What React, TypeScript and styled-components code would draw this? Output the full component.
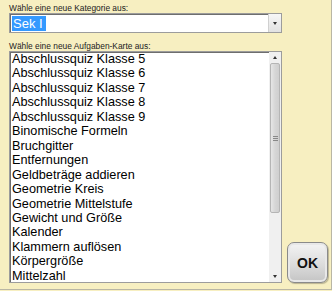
import React from 'react'
import styled, { createGlobalStyle } from 'styled-components'

const GlobalStyle = createGlobalStyle`
  html, body {
    margin: 0;
    padding: 0;
    background: #f7efc1;
  }
`

const Frame = styled.div`
  box-sizing: border-box;
  width: 332px;
  height: 290px;
  display: flex;
  gap: 5px;
  padding: 3px 0 0 9px;
  background: #f7efc1;
  border-right: 1px solid #b9b6a4;
  border-bottom: 1px solid #b9b6a4;
  font-family: 'Liberation Sans', Arial, sans-serif;
`

const Column = styled.div`
  display: flex;
  flex-direction: column;
  width: 273px;
`

const Label = styled.div<{ $top?: number }>`
  font-size: 8.4px;
  line-height: 10px;
  color: #222;
  margin-top: ${(p) => p.$top ?? 0}px;
`

const SelectBox = styled.div`
  box-sizing: border-box;
  height: 20px;
  display: flex;
  align-items: center;
  background: #fff;
  border: 1px solid #9c9c9c;
  box-shadow: inset 1px 1px 0 #6e6e6e;
  padding-left: 2px;
`

const Selected = styled.span`
  flex: 1;
  display: flex;
  align-items: center;
`

const Highlight = styled.span`
  background: #3399ff;
  color: #fff;
  font-size: 13px;
  line-height: 15px;
  padding: 0 3px 0 1px;
`

const ArrowButton = styled.div`
  width: 12px;
  align-self: stretch;
  display: flex;
  align-items: center;
  justify-content: center;
  background: linear-gradient(#f7f7f7, #e2e2e2);
  border-left: 1px solid #d0d0d0;
`

const Triangle = styled.span<{ $up?: boolean }>`
  width: 0;
  height: 0;
  border-left: 2.5px solid transparent;
  border-right: 2.5px solid transparent;
  ${(p) => (p.$up ? 'border-bottom: 3px solid #333;' : 'border-top: 3px solid #333;')}
`

const ListBox = styled.div`
  box-sizing: border-box;
  height: 232px;
  display: flex;
  background: #fff;
  border: 1px solid #9c9c9c;
  box-shadow: inset 1px 1px 0 #6e6e6e;
  overflow: hidden;
`

const Items = styled.div`
  flex: 1;
  padding: 0 0 0 2px;
  overflow: hidden;
`

const Item = styled.div`
  font-size: 12.7px;
  line-height: 14.45px;
  color: #000;
  white-space: nowrap;
`

const ScrollBar = styled.div`
  width: 12px;
  display: flex;
  flex-direction: column;
  background: #f0f0f0;
`

const ScrollArrow = styled.div`
  height: 11px;
  display: flex;
  align-items: center;
  justify-content: center;
`

const Thumb = styled.div`
  box-sizing: border-box;
  height: 150px;
  margin: 0 1px;
  border: 1px solid #b5b5b5;
  border-radius: 2px;
  background: linear-gradient(90deg, #e6e6e6, #d6d6d6 50%, #cfcfcf);
  display: flex;
  flex-direction: column;
  align-items: center;
  justify-content: center;
  gap: 1px;
`

const Grip = styled.span`
  width: 5px;
  height: 1px;
  background: #888;
`

const Track = styled.div`
  flex: 1;
`

const Side = styled.div`
  flex: 1;
  display: flex;
  flex-direction: column;
  justify-content: flex-end;
  padding-bottom: 6px;
`

const OkButton = styled.button`
  box-sizing: border-box;
  width: 41px;
  height: 41px;
  border: 1px solid #8a8a8a;
  border-radius: 7px;
  background: linear-gradient(#f4f4f4, #dcdcdc 55%, #c4c4c4);
  box-shadow: inset 0 0 0 2px #e8e8e8, 1px 1px 1px rgba(0, 0, 0, 0.25);
  font-family: 'Liberation Sans', Arial, sans-serif;
  font-weight: bold;
  font-size: 14px;
  color: #111;
  padding: 0;
`

const items = [
  'Abschlussquiz Klasse 5',
  'Abschlussquiz Klasse 6',
  'Abschlussquiz Klasse 7',
  'Abschlussquiz Klasse 8',
  'Abschlussquiz Klasse 9',
  'Binomische Formeln',
  'Bruchgitter',
  'Entfernungen',
  'Geldbeträge addieren',
  'Geometrie Kreis',
  'Geometrie Mittelstufe',
  'Gewicht und Größe',
  'Kalender',
  'Klammern auflösen',
  'Körpergröße',
  'Mittelzahl',
]

export default function App() {
  return (
    <>
      <GlobalStyle />
      <Frame>
        <Column>
          <Label>Wähle eine neue Kategorie aus:</Label>
          <SelectBox>
            <Selected>
              <Highlight>Sek I</Highlight>
            </Selected>
            <ArrowButton>
              <Triangle />
            </ArrowButton>
          </SelectBox>
          <Label $top={8}>Wähle eine neue Aufgaben-Karte aus:</Label>
          <ListBox>
            <Items>
              {items.map((it) => (
                <Item key={it}>{it}</Item>
              ))}
            </Items>
            <ScrollBar>
              <ScrollArrow>
                <Triangle $up />
              </ScrollArrow>
              <Thumb>
                <Grip />
                <Grip />
                <Grip />
              </Thumb>
              <Track />
              <ScrollArrow>
                <Triangle />
              </ScrollArrow>
            </ScrollBar>
          </ListBox>
        </Column>
        <Side>
          <OkButton>OK</OkButton>
        </Side>
      </Frame>
    </>
  )
}
